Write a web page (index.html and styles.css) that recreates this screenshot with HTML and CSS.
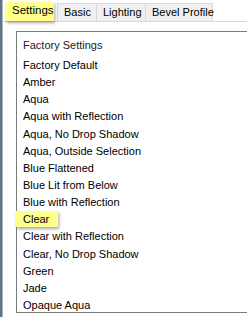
FILE: index.html
```html
<!DOCTYPE html>
<html lang="en">

<head>
    <meta charset="UTF-8">
    <meta name="viewport" content="width=device-width, initial-scale=1.0">
    <title>Settings</title>
    <link rel="stylesheet" href="styles.css">
</head>

<body>
    <div class="window">
        <div class="edge"></div>
        <div class="main">
            <div class="tabs">
                <div class="tab tab-settings hl">Settings</div>
                <div class="tab tab-basic">Basic</div>
                <div class="tab tab-lighting">Lighting</div>
                <div class="tab tab-bevel">Bevel Profile</div>
            </div>
            <div class="panel">
                <ul class="list">
                    <li class="group">Factory Settings</li>
                    <li>Factory Default</li>
                    <li>Amber</li>
                    <li>Aqua</li>
                    <li>Aqua with Reflection</li>
                    <li>Aqua, No Drop Shadow</li>
                    <li>Aqua, Outside Selection</li>
                    <li>Blue Flattened</li>
                    <li>Blue Lit from Below</li>
                    <li>Blue with Reflection</li>
                    <li><span class="item-hl hl">Clear</span></li>
                    <li>Clear with Reflection</li>
                    <li>Clear, No Drop Shadow</li>
                    <li>Green</li>
                    <li>Jade</li>
                    <li>Opaque Aqua</li>
                </ul>
            </div>
        </div>
    </div>
</body>

</html>
```

FILE: styles.css
```css
* {
    margin: 0;
    padding: 0;
    box-sizing: border-box;
}

body {
    width: 247px;
    height: 317px;
    overflow: hidden;
    background-color: #ffffff;
    font-family: "Liberation Sans", Arial, sans-serif;
    font-size: 11px;
    color: #000000;
}

.window {
    display: flex;
    height: 317px;
}

/* dark strip on the left edge */
.edge {
    width: 3px;
    background: linear-gradient(to right, #5f7485 0, #5f7485 2px, #a9b6c0 2px);
}

.main {
    flex: 1;
    min-width: 0;
}

.tabs {
    display: flex;
    align-items: flex-end;
    height: 22px;
    padding-left: 3px;
    border-bottom: 1px solid #d9d9d9;
}

.tab {
    height: 18px;
    line-height: 17px;
    padding: 0 6px;
    background-color: #f0f0f0;
    border: 1px solid #d9d9d9;
    border-bottom: none;
    margin-right: -1px;
    white-space: nowrap;
}

.tab-settings {
    width: 48px;
    height: 19px;
    margin-right: 3px;
    position: relative;
    z-index: 1;
    border: none;
    font-size: 11.5px;
}

.tab-basic {
    width: 40px;
}

.tab-lighting {
    width: 50px;
}

.tab-bevel {
    width: 68px;
}

/* yellow callout */
.hl {
    background-color: #ffff8c;
    box-shadow: 1px 2px 3px rgba(0, 0, 0, 0.35);
}

.panel {
    padding: 9px 0 0 13px;
}

.list {
    list-style: none;
    height: 282px;
    border: 1px solid #7a7a7a;
    border-right: none;
    padding-top: 5px;
}

.list li {
    height: 17.15px;
    line-height: 17px;
    padding-left: 6px;
    white-space: nowrap;
}

.list .group {
    height: 20px;
    color: #222222;
}

.item-hl {
    display: inline-block;
    width: 42px;
    height: 16px;
    line-height: 16px;
    margin-left: -7px;
    padding-left: 7px;
}
```
